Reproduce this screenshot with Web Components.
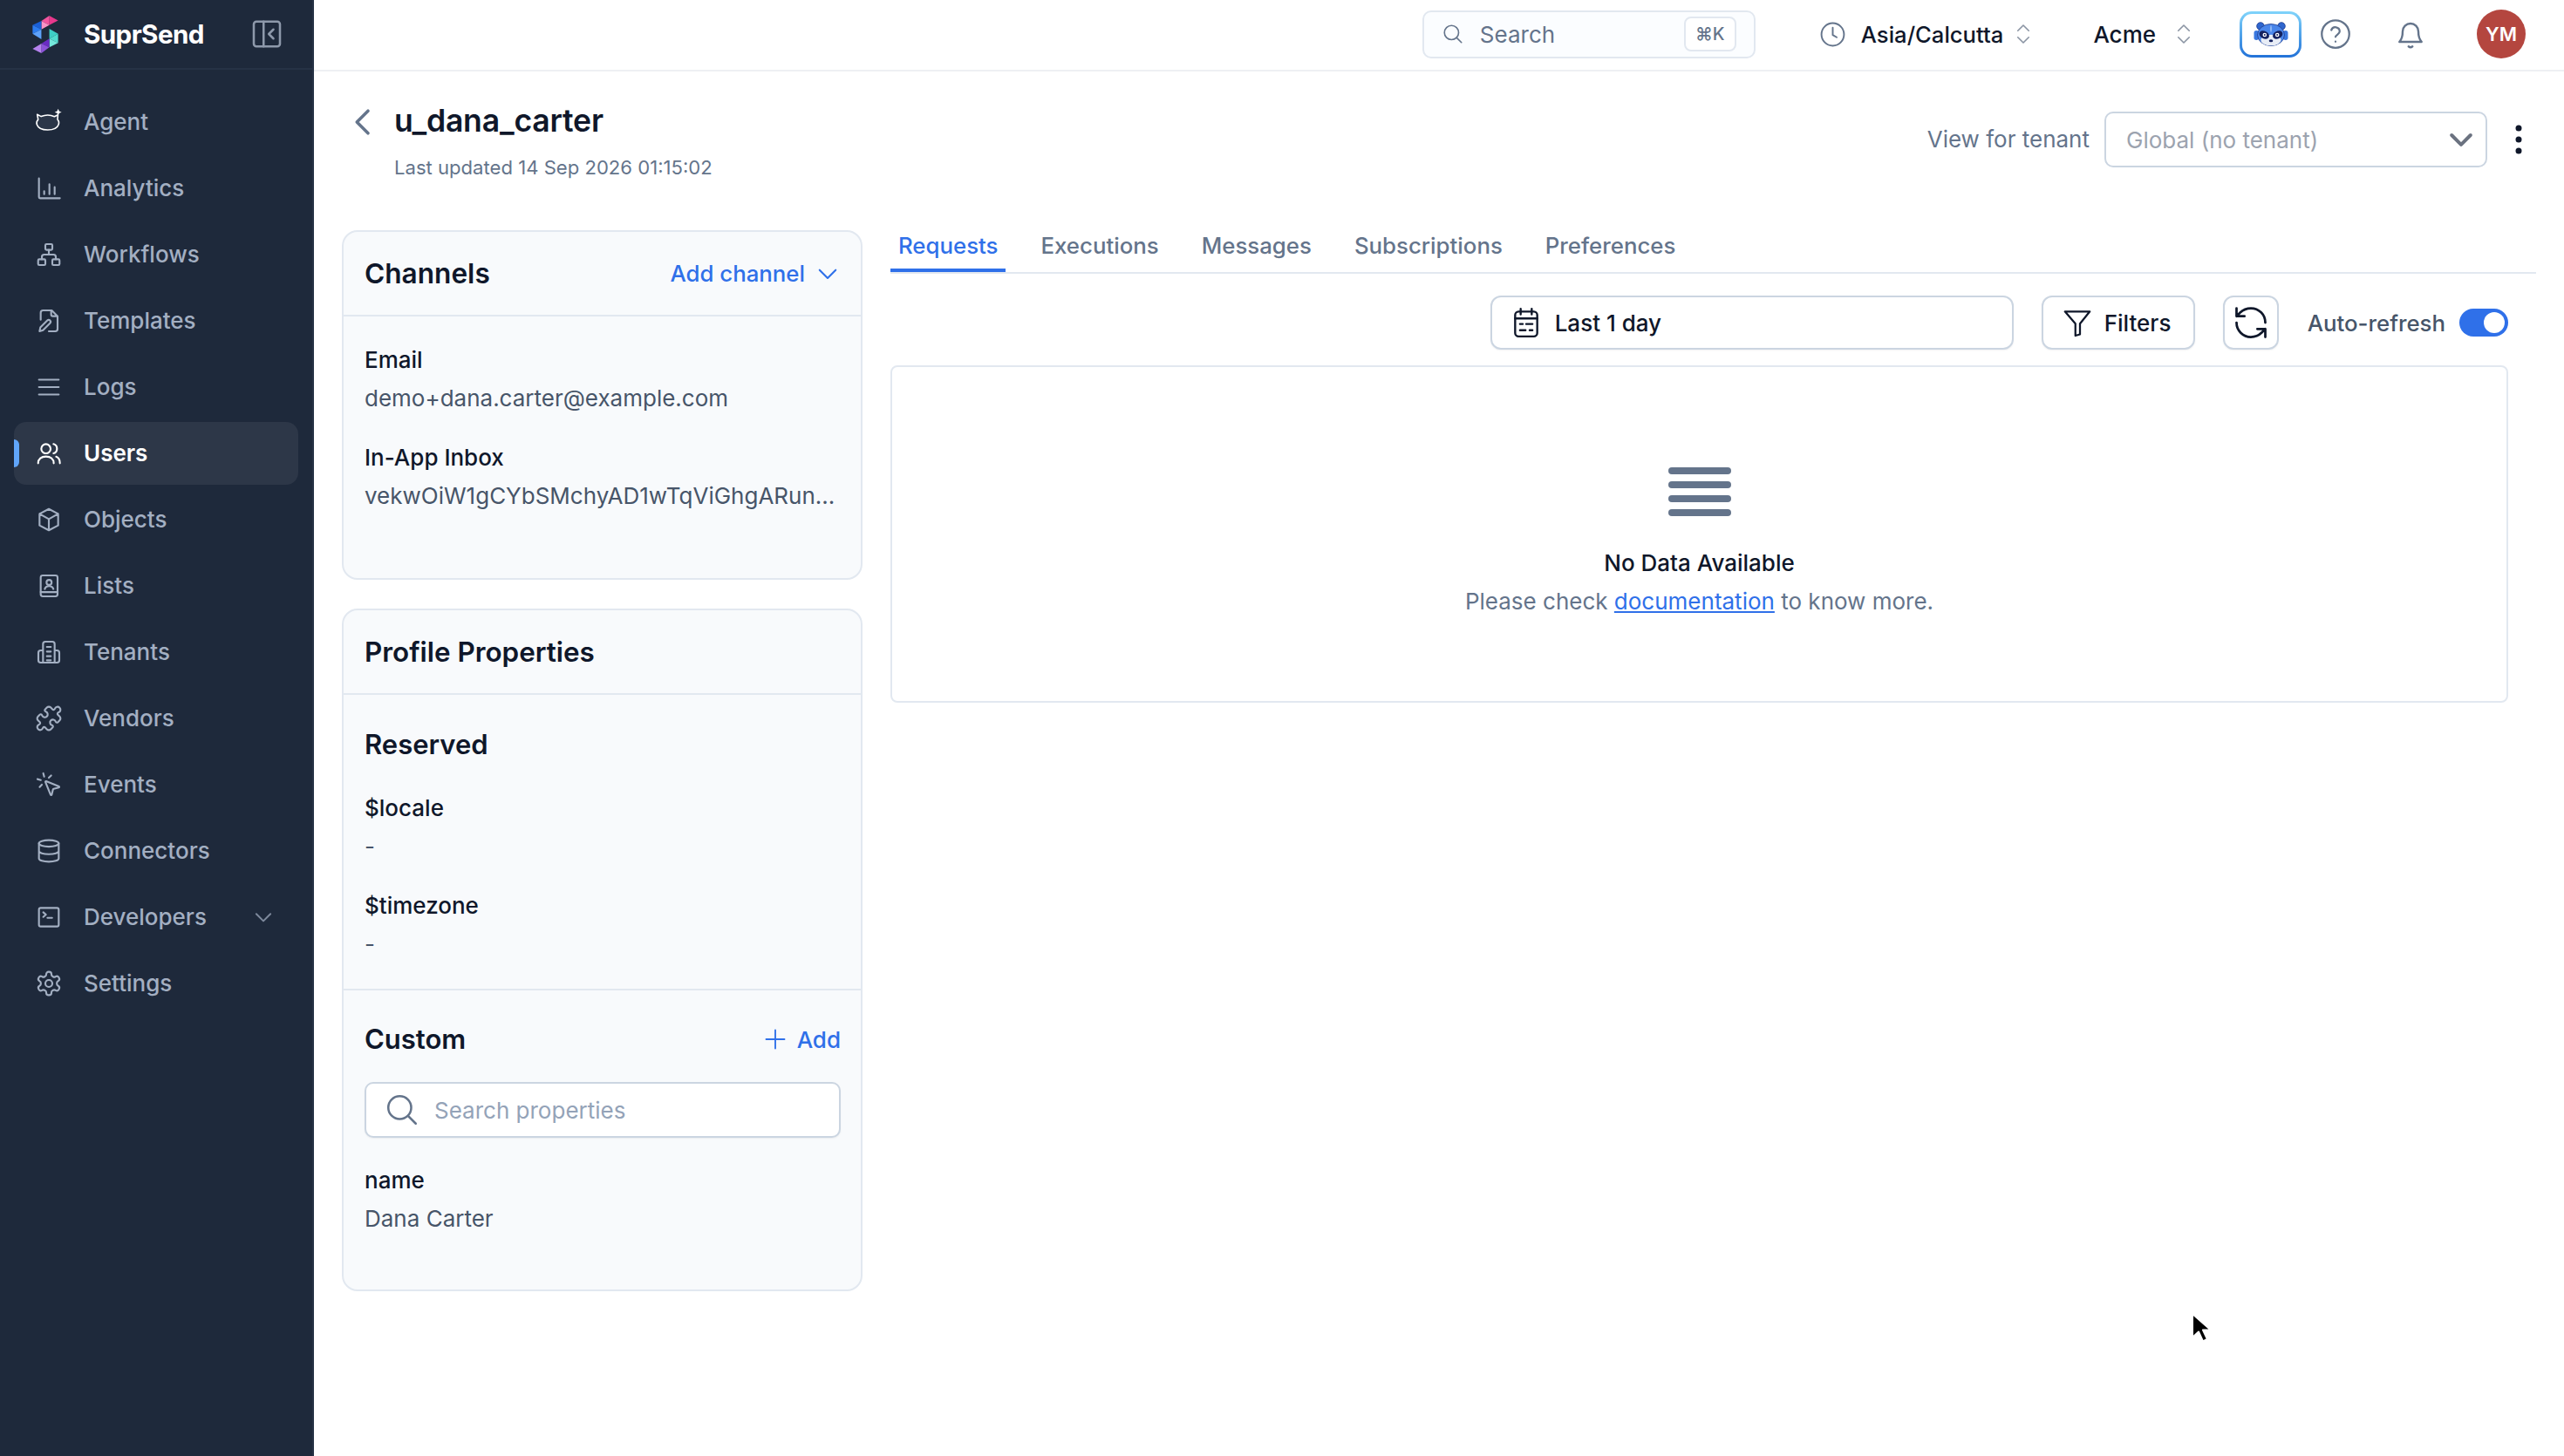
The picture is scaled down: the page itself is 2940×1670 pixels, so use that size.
<!DOCTYPE html>
<html lang="en"><head><meta charset="utf-8"><title>SuprSend</title>
<style>
html,body{margin:0;padding:0;background:#fff;height:1670px;overflow:hidden;font-family:Inter,"Liberation Sans",sans-serif;}
</style></head><body>
<app-shell>
  <app-sidebar slot="side">
    <nav-item icon="agent">Agent</nav-item>
    <nav-item icon="analytics">Analytics</nav-item>
    <nav-item icon="workflows">Workflows</nav-item>
    <nav-item icon="templates">Templates</nav-item>
    <nav-item icon="logs">Logs</nav-item>
    <nav-item icon="users" active>Users</nav-item>
    <nav-item icon="objects">Objects</nav-item>
    <nav-item icon="lists">Lists</nav-item>
    <nav-item icon="tenants">Tenants</nav-item>
    <nav-item icon="vendors">Vendors</nav-item>
    <nav-item icon="events">Events</nav-item>
    <nav-item icon="connectors">Connectors</nav-item>
    <nav-item icon="developers" expand>Developers</nav-item>
    <nav-item icon="settings">Settings</nav-item>
  </app-sidebar>
  <app-topbar slot="top"></app-topbar>
  <user-head slot="main"></user-head>
  <div slot="main" style="display:flex;align-items:flex-start">
    <div style="margin-left:32px;padding-top:14px;width:597px;flex:none;display:flex;flex-direction:column;gap:33px">
      <channels-card></channels-card>
      <profile-card></profile-card>
    </div>
    <div style="margin-left:32px;flex:1;margin-right:64px;min-width:0">
      <tab-bar></tab-bar>
      <log-toolbar></log-toolbar>
      <empty-panel></empty-panel>
    </div>
  </div>
</app-shell>
<mouse-cursor></mouse-cursor>
<script>
const ICONS={
agent:'<path d="M2.800 9.800 2 5.500l3.400 1.700C7.200 6.400 9 6 11 6c2.200 0 4.200.5 5.800 1.300l3-1.500-.3 4c1.100 1.300 1.400 2.800.9 4.200-1 3-4.700 4.700-9.400 4.700S2.700 17 1.700 14c-.5-1.600-.1-3 1.100-4.200Z" fill="#2b3648" stroke="#fff" stroke-width="1.200"/><path d="M20 .5l.9 2.100 2.100.9-2.100.9-.9 2.100-.9-2.100-2.100-.9 2.100-.9z" fill="#fff" stroke="none"/>',
analytics:'<path d="M3.500 3.500v16a1 1 0 0 0 1 1h17M8 17v-2.500M12.500 17V8.500M17 17v-6"/>',
workflows:'<rect x="9" y="3" width="6" height="5" rx="1"/><rect x="2.800" y="16" width="6.200" height="5" rx="1"/><rect x="15" y="16" width="6.200" height="5" rx="1"/><path d="M12 8v4M6 16v-2a2 2 0 0 1 2-2h8a2 2 0 0 1 2 2v2"/>',
templates:'<path d="M5 11V5a2 2 0 0 1 2-2h7.500L19.500 8v11a2 2 0 0 1-2 2H12M14 3v3.500A1.500 1.500 0 0 0 15.500 8h4"/><path d="M4 21l.7-3.300 6-6a1.600 1.600 0 0 1 2.300 2.300l-6 6z"/>',
logs:'<path d="M3.500 5.600h17M3.500 12h17M3.500 18.400h17"/>',
users:'<circle cx="9.500" cy="8" r="4"/><path d="M2.800 20.500c0-3.600 2.800-5.800 6.700-5.800s6.700 2.200 6.700 5.800M16 4c1.800.5 3 2.100 3 4s-1.200 3.500-3 4M18.300 14.900c2 .7 3.200 2.700 3.200 5.600"/>',
objects:'<path d="M12 2.800 20 7v10l-8 4.200L4 17V7zM4 7l8 4.500L20 7M12 11.500v9.700"/>',
lists:'<rect x="5" y="3" width="14.500" height="18" rx="1.800"/><path d="M5 17.300h14.500"/><circle cx="12.200" cy="9" r="2.200"/><path d="M8.500 14.700c.5-1.700 2-2.500 3.700-2.500s3.200.8 3.700 2.500"/>',
tenants:'<path d="M7 21V5a2 2 0 0 1 2-2h6a2 2 0 0 1 2 2v16M10.300 7.500h3.400M10.300 11.500h3.400M10.300 15.500h3.400M10.300 19h3.400M7 10.500H5a2 2 0 0 0-2 2V19a2 2 0 0 0 2 2h14a2 2 0 0 0 2-2v-6.500a2 2 0 0 0-2-2h-2"/>',
vendors:'<path d="M19.439 7.850c-.049.322.059.648.289.878l1.568 1.568c.47.47.706 1.087.706 1.704s-.235 1.233-.706 1.704l-1.611 1.611a.98.98 0 0 1-.837.276c-.47-.07-.802-.48-.968-.925a2.501 2.501 0 1 0-3.214 3.214c.446.166.855.497.925.968a.979.979 0 0 1-.276.837l-1.610 1.610a2.404 2.404 0 0 1-1.705.707 2.402 2.402 0 0 1-1.704-.706l-1.568-1.568a1.026 1.026 0 0 0-.877-.29c-.493.074-.84.504-1.020.968a2.500 2.500 0 1 1-3.237-3.237c.464-.18.894-.527.967-1.020a1.026 1.026 0 0 0-.289-.877l-1.568-1.568A2.402 2.402 0 0 1 1.998 12c0-.617.236-1.234.706-1.704L4.230 8.770c.24-.24.581-.353.917-.303.515.077.877.528 1.073 1.010a2.500 2.500 0 1 0 3.259-3.259c-.482-.196-.933-.558-1.010-1.073-.05-.336.062-.676.303-.917l1.525-1.525A2.402 2.402 0 0 1 12 2c.617 0 1.234.236 1.704.706l1.568 1.568c.23.23.556.338.877.29.493-.074.84-.504 1.020-.968a2.500 2.500 0 1 1 3.237 3.237c-.464.18-.894.527-.967 1.020Z"/>',
events:'<path d="M14 4.100 12 6M5.100 8l-2.900-.8M6 12l-1.900 2M7.200 2.200 8 5.100M9.037 9.690a.498.498 0 0 1 .653-.653l11 4.500a.5.5 0 0 1-.074.949l-4.349 1.041a1 1 0 0 0-.74.739l-1.040 4.350a.5.5 0 0 1-.95.074z"/>',
connectors:'<ellipse cx="12" cy="5.500" rx="8.500" ry="2.800"/><path d="M3.500 5.500v13c0 1.600 3.800 2.800 8.500 2.800s8.500-1.200 8.500-2.800v-13M3.500 12c0 1.600 3.800 2.800 8.500 2.800s8.500-1.200 8.500-2.800"/>',
developers:'<rect x="3.500" y="4" width="17" height="16" rx="1.500"/><path d="M7.200 7.800l2.300 2-2.300 2M10.800 12.600h4"/>',
settings:'<path d="M12.220 2h-.44a2 2 0 0 0-2 2v.18a2 2 0 0 1-1 1.730l-.43.25a2 2 0 0 1-2 0l-.15-.08a2 2 0 0 0-2.730.73l-.22.38a2 2 0 0 0 .73 2.730l.15.1a2 2 0 0 1 1 1.720v.51a2 2 0 0 1-1 1.740l-.15.09a2 2 0 0 0-.73 2.730l.22.38a2 2 0 0 0 2.730.73l.15-.08a2 2 0 0 1 2 0l.43.25a2 2 0 0 1 1 1.730V20a2 2 0 0 0 2 2h.44a2 2 0 0 0 2-2v-.18a2 2 0 0 1 1-1.730l.43-.25a2 2 0 0 1 2 0l.15.08a2 2 0 0 0 2.730-.73l.22-.39a2 2 0 0 0-.73-2.730l-.15-.08a2 2 0 0 1-1-1.740v-.5a2 2 0 0 1 1-1.740l.15-.09a2 2 0 0 0 .73-2.730l-.22-.38a2 2 0 0 0-2.730-.73l-.15.08a2 2 0 0 1-2 0l-.43-.25a2 2 0 0 1-1-1.730V4a2 2 0 0 0-2-2z"/><circle cx="12" cy="12" r="3"/>',
down:'<path d="M5.500 9l6.500 6.500L18.500 9"/>',
updown:'<path d="M7 9l5-5 5 5M7 15l5 5 5-5"/>',
left:'<path d="M16 3.500 7.500 12l8.500 8.500"/>',
collapse:'<rect x="2" y="2.500" width="20" height="19" rx="2"/><path d="M9.500 2.500v19M17 8.500 13.500 12l3.500 3.500"/>',
search:'<circle cx="10.500" cy="10.500" r="7.500"/><path d="M16 16l5 5"/>',
clock:'<circle cx="12" cy="12" r="10"/><path d="M12 6v6.500l3.500 2"/>',
help:'<circle cx="12" cy="12" r="10.500"/><path d="M8.800 9a3.300 3.300 0 0 1 6.400 1c0 2.200-3.200 2.700-3.200 4.200M12 17.800v.1"/>',
bell:'<path d="M3.500 18c1.700-1.800 2.500-3.400 2.500-8a6 6 0 0 1 12 0c0 4.600.8 6.200 2.500 8zM10.500 21.500c.8.700 2.200.7 3 0"/>',
plus:'<path d="M12 3v18M3 12h18"/>',
calendar:'<rect x="4" y="4" width="16" height="18" rx="2.500"/><path d="M4 9h16M8 2v4M16 2v4M7.500 13h2M12 13h4.500M7.500 17.500h4M14.500 17.500h2"/>',
funnel:'<path d="M2.500 3.500h19l-7.500 9.300V21l-3.500 1v-9.200z"/>',
refresh:'<path d="M21 12a9 9 0 0 0-9-9 9.750 9.750 0 0 0-6.740 2.740L3 8M3 3v5h5M3 12a9 9 0 0 0 9 9 9.750 9.750 0 0 0 6.740-2.740L21 16M16 16h5v5"/>'
};
const base=`:host{box-sizing:border-box}*{box-sizing:border-box}`;
function define(tag,html){
  customElements.define(tag,class extends HTMLElement{
    constructor(){super();this.attachShadow({mode:'open'});if(typeof html!=='function')this.shadowRoot.innerHTML=html;}
    connectedCallback(){if(typeof html==='function')this.shadowRoot.innerHTML=html(this);}
  });
}
define('ui-icon',h=>{
  const n=h.getAttribute('name')||'',s=h.getAttribute('size')||32,w=h.getAttribute('sw')||1.6;
  return `<style>:host{display:inline-flex;flex:none;width:${s}px;height:${s}px}svg{width:100%;height:100%;display:block;fill:none;stroke:currentColor;stroke-width:${w};stroke-linecap:round;stroke-linejoin:round}</style><svg viewBox="0 0 24 24">${ICONS[n]||''}</svg>`;
});
define('app-shell',`<style>${base}
:host{display:flex;width:2940px;height:1670px;overflow:hidden}
.side{width:360px;flex:none}
.col{flex:1;min-width:0;display:flex;flex-direction:column}
</style><div class="side"><slot name="side"></slot></div><div class="col"><slot name="top"></slot><slot name="main"></slot></div>`);
define('su-logo',`<style>:host{display:block;width:30px;height:43px;flex:none}svg{display:block;width:100%;height:100%}</style>
<svg viewBox="113 50 87 128">
<polygon points="170,50 200,66 170,82" fill="#e7388c"/><polygon points="143,68 170,50 170,82" fill="#f2559f"/><polygon points="143,68 170,82 143,97" fill="#fb93c5"/>
<polygon points="113,82 143,68 143,97" fill="#1a5fd6"/><polygon points="113,82 143,97 113,112" fill="#2c7cf0"/><polygon points="113,112 143,97 143,130" fill="#5ea2fb"/>
<polygon points="170,95 200,112 170,128" fill="#3ecfc6"/><polygon points="200,112 170,128 200,143" fill="#52dccf"/><polygon points="170,128 200,143 170,158" fill="#74e8dc"/>
<polygon points="170,128 170,158 143,145" fill="#6a2bc4"/><polygon points="143,145 170,158 143,178" fill="#8c52da"/><polygon points="113,163 143,145 143,178" fill="#b582ee"/>
</svg>`);
define('app-sidebar',`<style>${base}
:host{display:block;width:360px;height:1670px;background:#1e293b;border-right:2px solid #263245;font-family:Inter,"Liberation Sans",sans-serif}
.brand{height:80px;border-bottom:2px solid #263245;display:flex;align-items:center;padding-left:37px;padding-right:34px}
.name{margin-left:29px;color:#fff;font-size:29.6px;font-weight:700;letter-spacing:-.6px;flex:1}
.collapse{color:#8e99ab}
nav{padding:24px 16px 0;display:flex;flex-direction:column;gap:4px}
</style><div class="brand"><su-logo></su-logo><span class="name">SuprSend</span><ui-icon class="collapse" name="collapse" size="36" sw="1.700"></ui-icon></div><nav><slot></slot></nav>`);
define('nav-item',h=>{
  const a=h.hasAttribute('active');
  return `<style>${base}
:host{display:block;position:relative;height:72px;border-radius:14px;background:${a?'#2d3748':'transparent'};color:${a?'#fff':'#a3afc2'};font:${a?600:500} 26px/72px Inter,"Liberation Sans",sans-serif}
.row{display:flex;align-items:center;height:72px;padding-left:24px}
.label{margin-left:24px;flex:1}
.bar{position:absolute;left:0;top:20px;width:6px;height:32px;border-radius:0 6px 6px 0;background:#60a5fa}
.chev{color:#7d899c;margin-right:25px}
</style>${a?'<span class="bar"></span>':''}<div class="row"><ui-icon name="${h.getAttribute('icon')}" size="32"></ui-icon><span class="label"><slot></slot></span>${h.hasAttribute('expand')?'<ui-icon class="chev" name="down" size="30" sw="1.600"></ui-icon>':''}</div>`;
});
define('raccoon-mark',`<style>:host{display:block;width:40px;height:28px}svg{display:block;width:100%;height:100%}</style>
<svg viewBox="0 0 40 28">
<circle cx="8" cy="5" r="4.300" fill="#2f66cf" stroke="#1d3a8a" stroke-width=".8"/><circle cx="32" cy="5" r="4.300" fill="#2f66cf" stroke="#1d3a8a" stroke-width=".8"/>
<rect x=".5" y="10" width="5.500" height="11" rx="2.700" fill="#3a78e0"/><rect x="34" y="10" width="5.500" height="11" rx="2.700" fill="#3a78e0"/>
<ellipse cx="20" cy="15" rx="15.500" ry="12.500" fill="#4a86ea" stroke="#1d3a8a" stroke-width=".8"/>
<path d="M20 3.500c-1.500 3-1.500 6 0 9 1.500-3 1.500-6 0-9Z" fill="#8db6f5"/>
<ellipse cx="20" cy="21" rx="11.500" ry="6.300" fill="#e8edf6"/>
<ellipse cx="12.300" cy="15" rx="6" ry="4.300" transform="rotate(28 12.300 15)" fill="#15225f"/><ellipse cx="27.700" cy="15" rx="6" ry="4.300" transform="rotate(-28 27.700 15)" fill="#15225f"/>
<circle cx="12.800" cy="15" r="2.300" fill="#fff"/><circle cx="27.200" cy="15" r="2.300" fill="#fff"/>
<circle cx="12.800" cy="15" r="1" fill="#15225f"/><circle cx="27.200" cy="15" r="1" fill="#15225f"/>
<ellipse cx="20" cy="21.800" rx="2.300" ry="1.500" fill="#15225f"/>
</svg>`);
define('app-topbar',`<style>${base}
:host{display:flex;align-items:center;height:82px;border-bottom:2px solid #eef0f3;padding-bottom:2px;font:500 26px Inter,"Liberation Sans",sans-serif;color:#0f172a;justify-content:flex-end;padding-right:44px}
.search{width:382px;height:55px;border:2px solid #e2e8f0;border-radius:10px;background:#fbfdff;display:flex;align-items:center;padding-left:20px;padding-right:20px;color:#64748b;font-weight:400}
.search .t{margin-left:18px;flex:1}
kbd{width:60px;height:40px;border:2px solid #e2e8f0;border-radius:8px;background:#fff;font:500 20px Inter,"DejaVu Sans",sans-serif;display:flex;align-items:center;justify-content:center;color:#64748b}
.tz{margin-left:73px;display:flex;align-items:center;color:#64748b}
.tz b,.org b{font-weight:500;color:#0f172a}
.tz b{margin-left:17px;margin-right:8px;font-size:25.6px}
.ud{color:#8a94a3}
.org{margin-left:65px;display:flex;align-items:center}
.org b{margin-right:17px}
.rac{margin-left:49px;width:71px;height:53px;border-radius:14px;border:3px solid transparent;background:linear-gradient(#fff,#fff) padding-box,linear-gradient(#80d4fb,#2272d8) border-box;display:flex;align-items:center;justify-content:center}
.ic{color:#64748b}
.help{margin-left:21px}
.bell{margin-left:50px}
.av{margin-left:58px;width:56px;height:56px;border-radius:50%;background:#b4463f;color:#fff;font:600 22px Inter,"Liberation Sans",sans-serif;display:flex;align-items:center;justify-content:center}
</style>
<div class="search"><ui-icon class="ic" name="search" size="26" sw="1.500"></ui-icon><span class="t">Search</span><kbd>⌘K</kbd></div>
<div class="tz"><ui-icon name="clock" size="31" sw="1.500"></ui-icon><b>Asia/Calcutta</b><ui-icon class="ud" name="updown" size="30" sw="1.300"></ui-icon></div>
<div class="org"><b>Acme</b><ui-icon class="ud" name="updown" size="30" sw="1.300"></ui-icon></div>
<div class="rac"><raccoon-mark></raccoon-mark></div>
<ui-icon class="ic help" name="help" size="36" sw="1.500"></ui-icon>
<ui-icon class="ic bell" name="bell" size="36" sw="1.600"></ui-icon>
<div class="av">YM</div>`);
define('user-head',`<style>${base}
:host{display:flex;height:168px;font-family:Inter,"Liberation Sans",sans-serif}
.back{color:#64748b;margin-left:38px;margin-top:40px;margin-right:18px}
.t{flex:1}
h1{margin:35px 0 0;font-size:35.6px;line-height:44px;font-weight:600;color:#0f172a;letter-spacing:-.2px}
p{margin:13px 0 0;font-size:22.1px;line-height:36px;color:#64748b;font-weight:400}
.r{display:flex;align-items:flex-start;padding-top:46px;padding-right:48px}
.lbl{font-size:26px;line-height:64px;color:#64748b;margin-right:17px}
.sel{width:439px;height:64px;border:2px solid #cbd5e1;border-radius:10px;display:flex;align-items:center;padding-left:23px;padding-right:8px;font-size:26px;color:#9ca3af}
.sel span{flex:1}
.sel ui-icon{color:#6b7280}
svg.k{display:block;width:8px;height:34px;margin:15px 0 0 32px;fill:#0f172a}
</style>
<ui-icon class="back" name="left" size="36" sw="2.400"></ui-icon>
<div class="t"><h1>u_dana_carter</h1><p>Last updated 14 Sep 2026 01:15:02</p></div>
<div class="r"><span class="lbl">View for tenant</span><div class="sel"><span>Global (no tenant)</span><ui-icon name="down" size="40" sw="2.400"></ui-icon></div><svg class="k" viewBox="0 0 8 34"><circle cx="4" cy="4" r="3.500"/><circle cx="4" cy="17" r="3.500"/><circle cx="4" cy="30" r="3.500"/></svg></div>`);
define('data-field',h=>`<style>${base}
:host{display:block;margin-bottom:28px;font-family:Inter,"Liberation Sans",sans-serif}
.l{font-size:26px;line-height:40px;font-weight:500;color:#0f172a}
.v{font-size:26px;line-height:40px;font-weight:400;color:#475569;margin-top:4px;white-space:nowrap;overflow:hidden}
</style><div class="l">${h.getAttribute('label')}</div><div class="v"><slot></slot></div>`);
define('channels-card',`<style>${base}
:host{display:block;width:597px;height:401px;background:#f8fafc;border:2px solid #e2e8f0;border-radius:18px;font-family:Inter,"Liberation Sans",sans-serif}
.h{height:97px;border-bottom:2px solid #e2e8f0;display:flex;align-items:center;justify-content:space-between;padding:0 21px 0 24px}
.h b{font-size:31.6px;font-weight:600;color:#0f172a}
.a{color:#2f70e9;font-size:25.8px;font-weight:500;display:flex;align-items:center;gap:9px}
.b{padding:30px 23px 0 24px}
</style><div class="h"><b>Channels</b><span class="a">Add channel<ui-icon name="down" size="34" sw="1.500"></ui-icon></span></div>
<div class="b"><data-field label="Email">demo+dana.carter@example.com</data-field><data-field label="In-App Inbox">vekwOiW1gCYbSMchyAD1wTqViGhgARun...</data-field></div>`);
define('profile-card',`<style>${base}
:host{display:block;width:597px;height:783px;background:#f8fafc;border:2px solid #e2e8f0;border-radius:18px;font-family:Inter,"Liberation Sans",sans-serif}
.h{height:97px;border-bottom:2px solid #e2e8f0;display:flex;align-items:center;padding:0 24px}
b{font-size:31.4px;font-weight:600;color:#0f172a;line-height:44px;display:block}
.r{padding:35px 23px 3px 24px;border-bottom:2px solid #e2e8f0}
.r b{margin-bottom:31px;font-size:31px}
.c{padding:34px 23px 0 24px}
.ch{display:flex;justify-content:space-between;align-items:center}
.ch b{font-size:31px}
.add{color:#2f70e9;font-size:26px;font-weight:500;display:flex;align-items:center;gap:11px}
.in{height:64px;margin-top:27px;margin-bottom:29px;background:#fff;border:2px solid #cbd5e1;border-radius:10px;display:flex;align-items:center;padding-left:20px;color:#94a3b8;font-size:26px;box-shadow:0 1px 2px rgba(15,23,42,.06)}
.in ui-icon{color:#64748b;margin-right:16px}
</style><div class="h"><b>Profile Properties</b></div>
<div class="r"><b>Reserved</b><data-field label="$locale">-</data-field><data-field label="$timezone">-</data-field></div>
<div class="c"><div class="ch"><b>Custom</b><span class="add"><ui-icon name="plus" size="28" sw="1.600"></ui-icon>Add</span></div>
<div class="in"><ui-icon name="search" size="42" sw="1.450"></ui-icon><span>Search properties</span></div>
<data-field label="name">Dana Carter</data-field></div>`);
define('tab-bar',`<style>${base}
:host{display:flex;gap:31px;height:64px;border-bottom:2px solid #e2e8f0;margin-right:-32px;font:500 25.8px Inter,"Liberation Sans",sans-serif;color:#64748b}
span{padding:0 9px;height:62px;line-height:64px}
.on{color:#2f70e9;border-bottom:4px solid #2f70e9}
</style><span class="on">Requests</span><span>Executions</span><span>Messages</span><span>Subscriptions</span><span>Preferences</span>`);
define('log-toolbar',`<style>${base}
:host{display:flex;align-items:center;justify-content:flex-end;height:62px;margin-top:25px;font:500 26px Inter,"Liberation Sans",sans-serif;color:#0f172a}
.btn{height:62px;border:2px solid #cbd5e1;border-radius:12px;background:#fff;display:flex;align-items:center;box-shadow:0 1px 2px rgba(15,23,42,.06)}
.date{width:600px;padding-left:20px;gap:14px}
.f{width:176px;margin-left:32px;padding-left:21px;gap:13px}
.re{width:64px;margin-left:32px;justify-content:center}
.ar{margin-left:33px;color:#475569;font-size:25.8px}
.tg{margin-left:16px;width:56px;height:32px;border-radius:16px;background:#2f70e9;position:relative;flex:none}
.tg i{position:absolute;right:4px;top:4px;width:24px;height:24px;border-radius:50%;background:#fff}
</style>
<div class="btn date"><ui-icon name="calendar" size="38" sw="1.500"></ui-icon>Last 1 day</div>
<div class="btn f"><ui-icon name="funnel" size="36" sw="1.500"></ui-icon>Filters</div>
<div class="btn re"><ui-icon name="refresh" size="44" sw="1.500"></ui-icon></div>
<span class="ar">Auto-refresh</span><span class="tg"><i></i></span>`);
define('empty-panel',`<style>${base}
:host{display:flex;flex-direction:column;align-items:center;height:387px;margin-top:18px;border:2px solid #e2e8f0;border-radius:8px;background:#fff;font:400 26px/40px Inter,"Liberation Sans",sans-serif;color:#64748b;padding-top:115px}
.i{display:flex;flex-direction:column;gap:8px;margin-bottom:34px}
.i span{width:72px;height:8px;border-radius:4px;background:#64748b}
b{color:#0f172a;font-weight:500}
p{margin:4px 0 0}
a{color:#2f70e9;text-decoration:underline}
</style><div class="i"><span></span><span></span><span></span><span></span></div><b>No Data Available</b><p>Please check <a href="#">documentation</a> to know more.</p>`);
define('mouse-cursor',`<style>:host{position:fixed;left:2512px;top:1505px;width:24px;height:38px;display:block;pointer-events:none}svg{display:block;width:100%;height:100%}</style>
<svg viewBox="0 0 24 38"><path d="M2 2v27l7-6.500 5 11 5-2.500-5-10.500h9z" fill="#000" stroke="#fff" stroke-width="2" stroke-linejoin="round"/></svg>`);
</script>
</body></html>
